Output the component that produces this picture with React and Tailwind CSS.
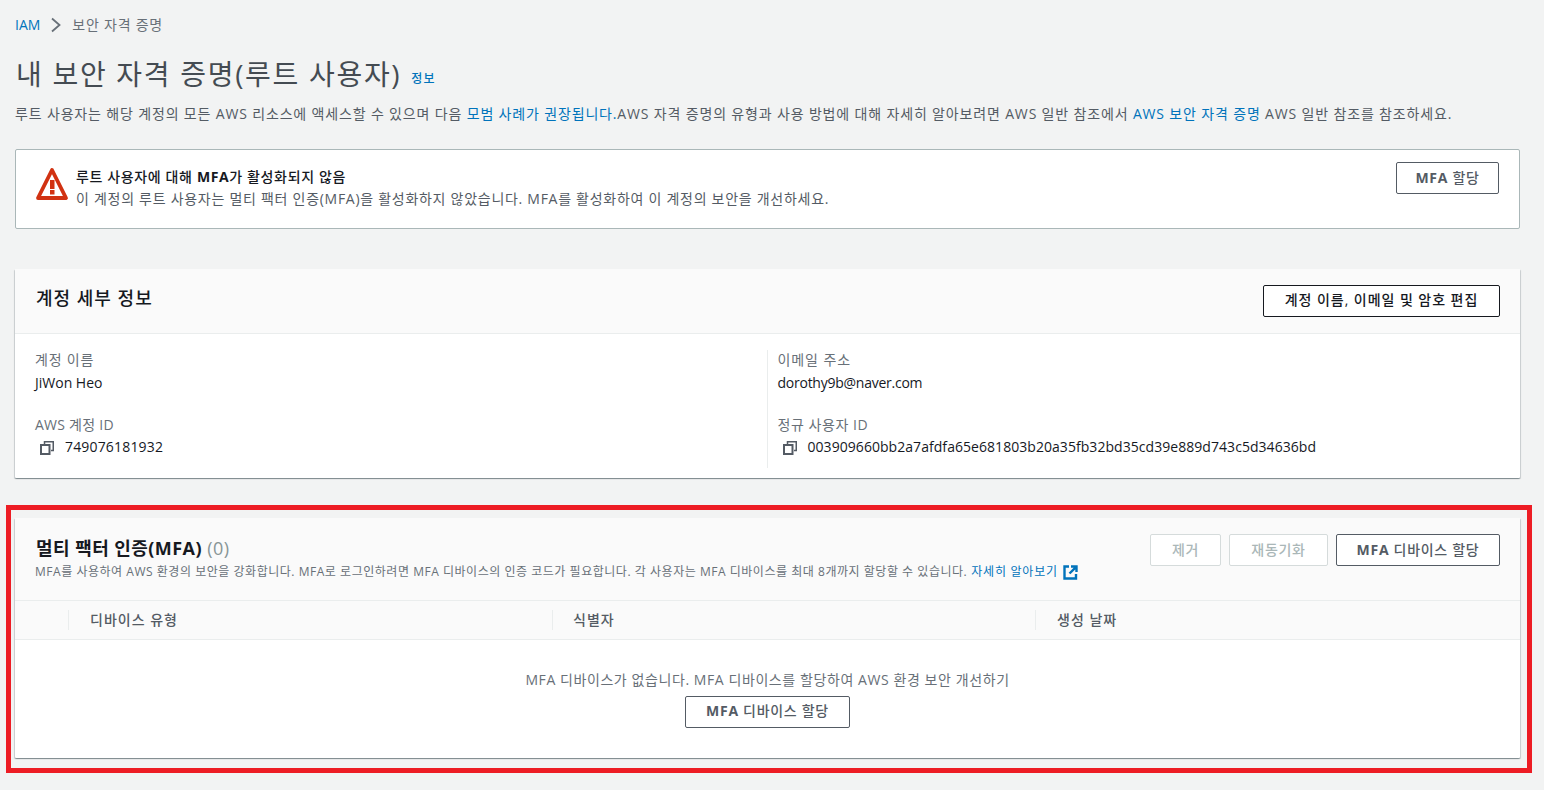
const font = "font-['Open_Sans','Noto_Sans_CJK_KR',sans-serif]";

function CopyIcon() {
  return (
    <svg width="16" height="16" viewBox="0 0 16 16" fill="none" stroke="#545b64" strokeWidth="2" className="shrink-0">
      <rect x="2" y="6" width="8.5" height="9" />
      <path d="M5.5 5V2.75H14.25V11.5H12" strokeWidth="1.5" />
    </svg>
  );
}

function WarningIcon() {
  return (
    <svg width="33" height="33" viewBox="0 0 33 33" className="shrink-0">
      <path d="M16 3L30 31H2Z" fill="none" stroke="#d13212" strokeWidth="3.8" strokeLinejoin="round" />
      <rect x="14" y="13" width="4.5" height="9" fill="#d13212" />
      <rect x="14" y="23" width="4.5" height="4.5" fill="#d13212" />
    </svg>
  );
}

function ExternalIcon() {
  return (
    <svg width="15" height="15" viewBox="0 0 15 15" fill="none" stroke="#0073bb" strokeWidth="2.4" className="shrink-0">
      <path d="M6 1.5H1.5V13.5H13V9" />
      <path d="M8 1.5H13.5V7M13.2 1.8L6.5 8.5" />
    </svg>
  );
}

function Button({ children, className = '' }) {
  return (
    <button className={`h-8 rounded-[2px] border bg-white text-sm font-medium tracking-[0.7px] ${className}`}>
      {children}
    </button>
  );
}

function Field({ label, value, copy, labelClass = '', valueClass = '' }) {
  return (
    <div>
      <div className={`text-sm leading-5 text-[#687078] ${labelClass}`}>{label}</div>
      <div className={`flex items-center text-sm leading-5 text-[#16191f] ${copy ? 'mt-[2px]' : 'mt-[3px]'} ${valueClass}`}>
        {copy && <span className="ml-[4px] mr-[10px]"><CopyIcon /></span>}
        {value}
      </div>
    </div>
  );
}

const cardShadow = 'shadow-[0_1px_1px_0_rgba(0,28,36,0.3),1px_1px_1px_0_rgba(0,28,36,0.15),-1px_1px_1px_0_rgba(0,28,36,0.15)]';

export default function App() {
  return (
    <div className={`${font} min-h-[790px] overflow-hidden bg-[#f2f3f3] pl-[15px] pr-[24px] text-[#16191f]`}>
      {/* Breadcrumb */}
      <div className="mt-[15px] flex h-[20px] items-center text-sm">
        <span className="text-[#0073bb]">IAM</span>
        <svg width="10" height="16" viewBox="0 0 10 16" fill="none" stroke="#687078" strokeWidth="1.8" className="ml-[11px] mr-[11px]">
          <path d="M1 1.5L8.5 8L1 14.5" />
        </svg>
        <span className="tracking-[0.75px] text-[#687078]">보안 자격 증명</span>
      </div>

      {/* Title */}
      <div className="mt-[20px] flex h-[38px] items-center">
        <h1 className="ml-[1px] text-[28px] font-normal leading-[38px] tracking-[1.7px] text-[#444b52]">내 보안 자격 증명(루트 사용자)</h1>
        <span className="ml-[10px] mt-[10px] text-xs font-medium tracking-[1px] text-[#0073bb]">정보</span>
      </div>

      <p className="mt-[11px] h-[20px] whitespace-nowrap text-sm leading-5 tracking-[0.84px] text-[#545b64]">
        루트 사용자는 해당 계정의 모든 AWS 리소스에 액세스할 수 있으며 다음 <span className="text-[#0073bb]">모범 사례가 권장됩니다.</span>AWS 자격 증명의 유형과 사용 방법에 대해 자세히 알아보려면 AWS 일반 참조에서 <span className="text-[#0073bb]">AWS 보안 자격 증명</span> AWS 일반 참조를 참조하세요.
      </p>

      {/* MFA warning */}
      <div className="mt-[25px] flex h-[80px] items-start rounded-[2px] border border-[#aab7b8] bg-white px-[20px]">
        <div className="mt-[17px]"><WarningIcon /></div>
        <div className="ml-[7px] mt-[16px] text-sm leading-[22px]">
          <div className="font-medium tracking-[0.63px]">루트 사용자에 대해 <span className="font-bold">MFA</span>가 활성화되지 않음</div>
          <div className="tracking-[0.72px] text-[#545b64]">이 계정의 루트 사용자는 멀티 팩터 인증(MFA)을 활성화하지 않았습니다. MFA를 활성화하여 이 계정의 보안을 개선하세요.</div>
        </div>
        <Button className="ml-auto mt-[12px] w-[103px] border-[#545b64] text-[#545b64]"><span className="font-bold">MFA</span> 할당</Button>
      </div>

      {/* Account details */}
      <div className={`mt-[40px] h-[209px] rounded-[1px] bg-white ${cardShadow}`}>
        <div className="flex h-[65px] items-start justify-between border-b border-[#eaeded] bg-[#fafafa] pl-[21px] pr-[20px]">
          <h2 className="mt-[17px] text-lg font-medium leading-[25px] tracking-[1px]">계정 세부 정보</h2>
          <Button className="mt-[16px] w-[237px] border-[#16191f] pb-[2px] !tracking-[0.95px] text-[#16191f]">계정 이름, 이메일 및 암호 편집</Button>
        </div>
        <div className="grid grid-cols-2 pt-[16px]">
          <div className="flex h-[118px] w-[753px] flex-col gap-[22px] border-r border-[#eaeded] pl-[20px]">
            <Field label="계정 이름" labelClass="tracking-[0.8px]" value="JiWon Heo" />
            <Field label="AWS 계정 ID" labelClass="tracking-[0.25px]" value="749076181932" valueClass="tracking-[0.17px]" copy />
          </div>
          <div className="flex flex-col gap-[22px] pl-[10px]">
            <Field label="이메일 주소" labelClass="tracking-[0.9px]" value="dorothy9b@naver.com" valueClass="tracking-[-0.25px]" />
            <Field label="정규 사용자 ID" labelClass="tracking-[0.55px]" value="003909660bb2a7afdfa65e681803b20a35fb32bd35cd39e889d743c5d34636bd" valueClass="tracking-[0.05px]" copy />
          </div>
        </div>
      </div>

      {/* Highlight around the MFA card */}
      <div className="-ml-[9px] -mr-[12px] mt-[27px] border-[5px] border-[#ed1c24] pb-[10px] pl-[4px] pr-[7px] pt-[8px]">
        <div className={`rounded-[1px] bg-white ${cardShadow}`}>
          <div className="flex h-[83px] items-start justify-between border-b border-[#eaeded] bg-[#fafafa] pl-[21px] pr-[20px]">
            <div>
              <h2 className="mt-[18px] text-lg font-bold leading-[25px] tracking-[0.45px]">
                멀티 팩터 인증(MFA) <span className="font-normal text-[#879596]">(0)</span>
              </h2>
              <div className="-ml-[1px] mt-[3px] flex items-center text-xs leading-[16px] tracking-[0.53px] text-[#687078]">
                MFA를 사용하여 AWS 환경의 보안을 강화합니다. MFA로 로그인하려면 MFA 디바이스의 인증 코드가 필요합니다. 각 사용자는 MFA 디바이스를 최대 8개까지 할당할 수 있습니다.
                <span className="ml-[4px] tracking-[0.75px] text-[#0073bb]">자세히 알아보기</span>
                <span className="ml-[5px]"><ExternalIcon /></span>
              </div>
            </div>
            <div className="mt-[16px] flex gap-[8px]">
              <Button className="w-[71px] border-[#d5dbdb] text-[#aab7b8]">제거</Button>
              <Button className="w-[99px] border-[#d5dbdb] text-[#aab7b8]">재동기화</Button>
              <Button className="w-[164px] border-[#545b64] text-[#545b64]"><span className="font-bold">MFA</span> 디바이스 할당</Button>
            </div>
          </div>
          <div className="grid h-[39px] grid-cols-[54px_484px_483px_1fr] items-center border-b border-[#eaeded] bg-[#fafafa] text-sm font-medium tracking-[1px] text-[#545b64]">
            <div className="h-[20px] border-r border-[#eaeded]" />
            <div className="h-[20px] border-r border-[#eaeded] pl-[21px] leading-5">디바이스 유형</div>
            <div className="h-[20px] border-r border-[#eaeded] pl-[20px] leading-5">식별자</div>
            <div className="h-[20px] pl-[21px] leading-5">생성 날짜</div>
          </div>
          <div className="flex h-[118px] flex-col items-center pt-[30px]">
            <div className="text-sm leading-5 tracking-[0.58px] text-[#687078]">MFA 디바이스가 없습니다. MFA 디바이스를 할당하여 AWS 환경 보안 개선하기</div>
            <Button className="mt-[6px] w-[165px] border-[#545b64] pb-[2px] text-[#545b64]"><span className="font-bold">MFA</span> 디바이스 할당</Button>
          </div>
        </div>
      </div>
    </div>
  );
}
